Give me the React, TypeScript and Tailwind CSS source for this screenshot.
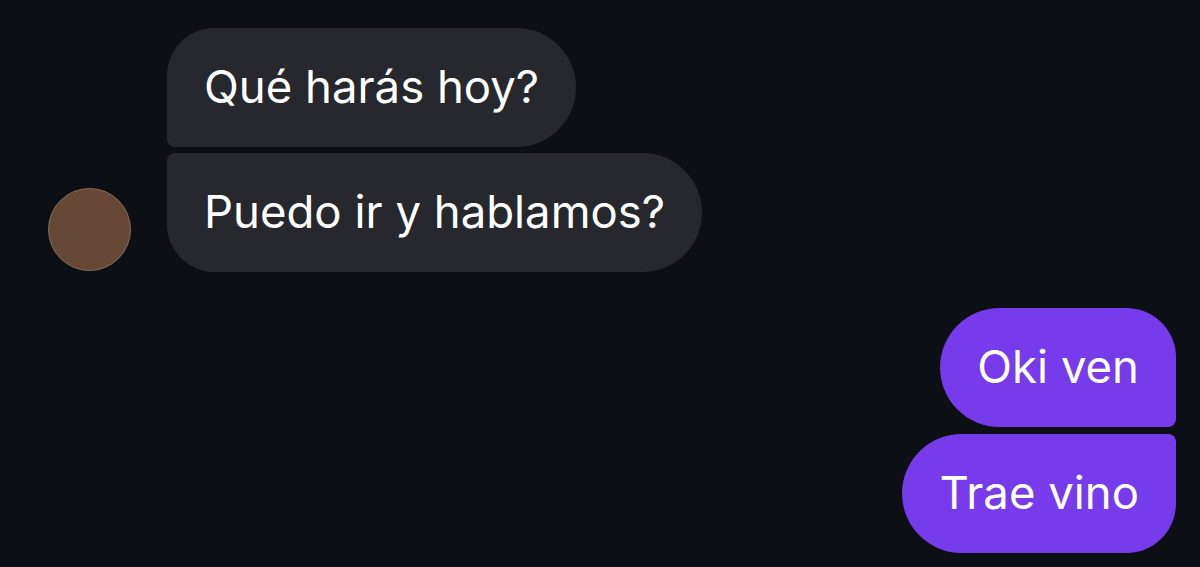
const font = { fontFamily: 'Inter, "Noto Sans", sans-serif' }

function Bubble({ text, className }: { text: string; className: string }) {
  return (
    <div className={`h-[119px] flex items-center px-[37px] text-[45.5px] text-white ${className}`}>
      {text}
    </div>
  )
}

export default function App() {
  return (
    <div className="w-[1200px] h-[567px] bg-[#0c0f14] overflow-hidden pt-[28px]" style={font}>
      {/* incoming */}
      <div className="flex items-end pl-[48px] gap-[36px]">
        <div className="w-[83px] h-[83px] rounded-full bg-[#654836] border border-[#8a6c58] mb-[1px] shrink-0" />
        <div className="flex flex-col items-start gap-[6px]">
          <Bubble
            text="Qué harás hoy?"
            className="bg-[#26282d] rounded-tl-[48px] rounded-bl-[8px] rounded-r-[60px]"
          />
          <Bubble
            text="Puedo ir y hablamos?"
            className="bg-[#26282d] rounded-tl-[8px] rounded-bl-[48px] rounded-r-[60px]"
          />
        </div>
      </div>

      {/* outgoing */}
      <div className="flex flex-col items-end gap-[7px] pr-[24px] mt-[36px]">
        <Bubble
          text="Oki ven"
          className="bg-[#763bea] rounded-l-[60px] rounded-tr-[50px] rounded-br-[8px]"
        />
        <Bubble
          text="Trae vino"
          className="bg-[#763bea] rounded-l-[60px] rounded-tr-[8px] rounded-br-[50px]"
        />
      </div>
    </div>
  )
}
